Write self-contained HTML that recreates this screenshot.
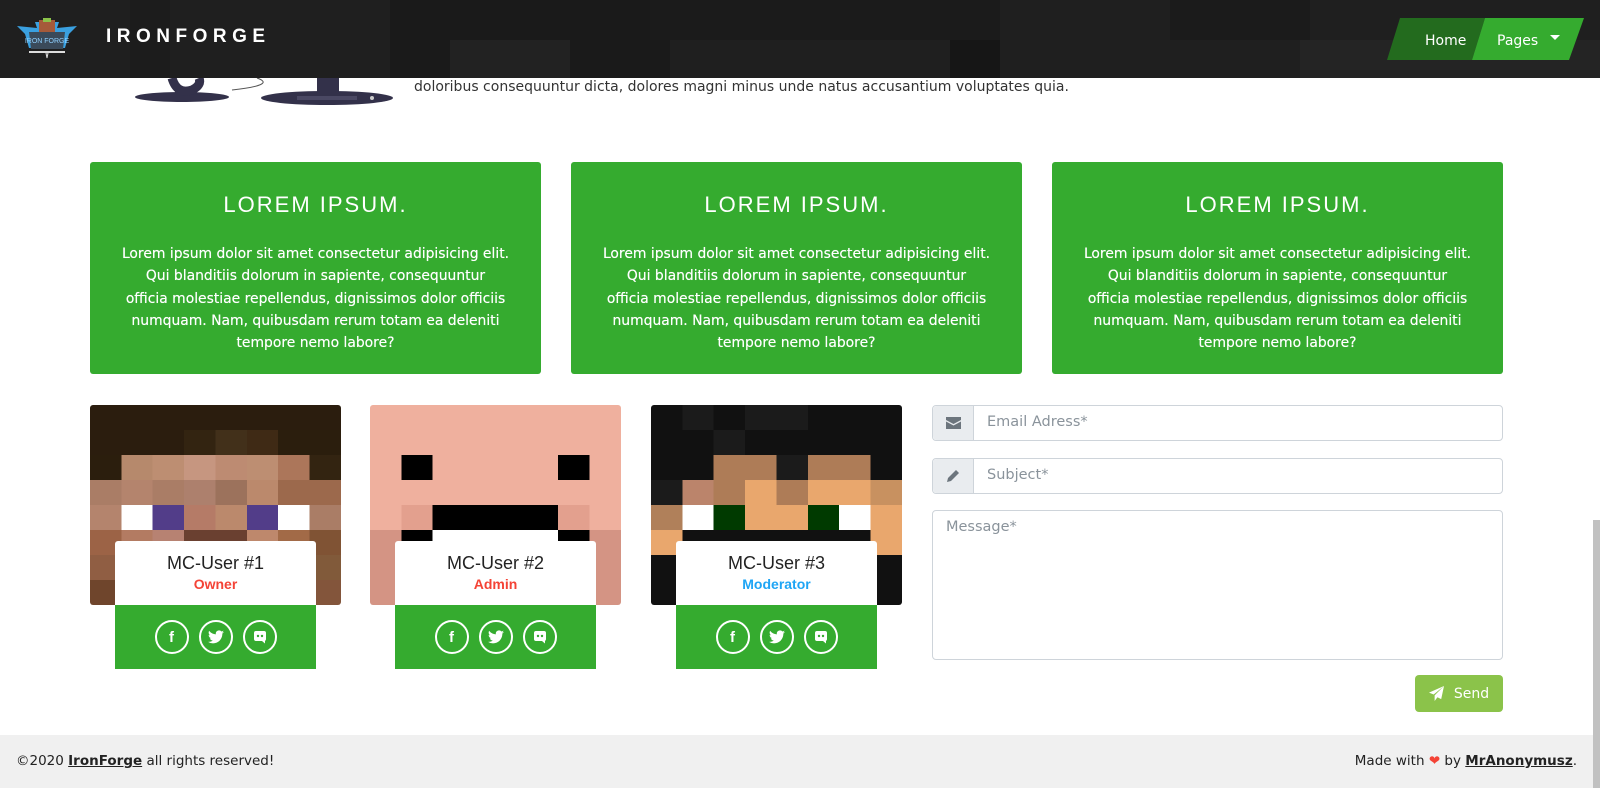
<!DOCTYPE html>
<html><head><meta charset="utf-8">
<style>
*{margin:0;padding:0;box-sizing:border-box}
body{width:1600px;height:788px;overflow:hidden;background:#fff;font-family:"Liberation Sans",sans-serif;position:relative;color:#333}
.abs{position:absolute}
.dj{font-family:"DejaVu Sans",sans-serif}
.nav{left:0;top:0;width:1600px;height:78px;background:#1f1f1f;overflow:hidden}
.nav .t{position:absolute;background:#191919}
.brand{left:106px;top:26px;color:#fff;font-weight:bold;font-size:19px;letter-spacing:5.5px}
.box{top:162px;width:451px;height:212px;background:#35ab2f;border-radius:3px;color:#fff;text-align:center}
.box h2{font-weight:normal;font-size:22px;letter-spacing:2px;margin-top:29px;line-height:28px}
.box p{font-family:"DejaVu Sans",sans-serif;font-size:13.9px;line-height:22.3px;margin:24px 0 0;white-space:nowrap;text-shadow:0 0 0.4px #fff}
.face{top:405px;width:251px;height:200px;border-radius:3px;overflow:hidden}
.face div{height:25px}
.name{top:541px;width:201px;height:64px;background:#fff;border-radius:3px 3px 0 0;text-align:center}
.name .n{font-size:18px;color:#222;margin-top:11px;line-height:22px}
.name .r{font-size:14px;font-weight:bold;margin-top:2px}
.soc{top:605px;width:201px;height:64px;background:#35ab2f;display:flex;justify-content:center;align-items:center;gap:10px}
.soc span{width:34px;height:34px;border:2px solid #fff;border-radius:50%;display:flex;align-items:center;justify-content:center;color:#fff;font-weight:bold;font-size:15px}
.inp{left:932px;width:571px;height:36px;border:1px solid #ced4da;border-radius:4px;background:#fff;font-size:14.5px;color:#8a939b;font-family:"DejaVu Sans",sans-serif}
.add{position:absolute;left:0;top:0;width:41px;height:34px;background:#e9ecef;border-right:1px solid #ced4da;display:flex;align-items:center;justify-content:center;border-radius:4px 0 0 4px}
.foot{left:0;top:735px;width:1593px;height:53px;background:#f0f0f0;font-size:13.5px;color:#222;font-family:"DejaVu Sans",sans-serif}
.foot b{text-decoration:underline}
</style></head><body>
<div class="abs" style="left:127px;top:60px;width:270px;height:45px">
<svg width="270" height="45" viewBox="0 0 270 45"><ellipse cx="55" cy="37" rx="47" ry="5" fill="#33314a"/><path d="M45 18 Q50 35 65 30 Q75 25 72 18" stroke="#33314a" stroke-width="9" fill="none"/><rect x="48" y="28" width="6" height="10" fill="#33314a"/><path d="M105 30 Q150 25 130 18" stroke="#555" fill="none"/><ellipse cx="200" cy="38" rx="66" ry="7" fill="#33314a"/><rect x="190" y="18" width="22" height="20" fill="#33314a"/><rect x="170" y="36" width="60" height="4" fill="#4a4863"/><circle cx="245" cy="38" r="2" fill="#ccc"/></svg></div>
<div class="abs dj" style="left:414px;top:79px;font-size:14px;color:#333;white-space:nowrap">doloribus consequuntur dicta, dolores magni minus unde natus accusantium voluptates quia.</div>
<div class="abs nav">
<div class="t" style="left:130px;top:0;width:40px;height:78px;background:#1c1c1c"></div>
<div class="t" style="left:390px;top:0;width:280px;height:78px;background:#1a1a1a"></div>
<div class="t" style="left:450px;top:40px;width:120px;height:38px;background:#222"></div>
<div class="t" style="left:650px;top:0;width:350px;height:40px;background:#1b1b1b"></div>
<div class="t" style="left:950px;top:40px;width:50px;height:38px;background:#161616"></div>
<div class="t" style="left:1170px;top:0;width:140px;height:40px;background:#1b1b1b"></div>
<div class="t" style="left:1300px;top:40px;width:300px;height:38px;background:#242424"></div>
<svg class="abs" style="left:15px;top:18px" width="64" height="42" viewBox="0 0 64 42"><path d="M2 8 L22 10 L20 4 L44 4 L42 10 L62 8 L54 16 L50 30 L14 30 L10 16Z" fill="#3aa0e0"/><rect x="24" y="2" width="16" height="16" fill="#a55a3a"/><rect x="28" y="0" width="8" height="4" fill="#8bc34a"/><path d="M14 14 L50 14 L48 31 L16 31Z" fill="#3a4a5a"/><text x="32" y="25" font-size="7" fill="#8fd0ff" text-anchor="middle" font-family="Liberation Sans">IRON FORGE</text><rect x="14" y="33" width="36" height="2" fill="#ddd"/><path d="M31 35 L32 40 L33 35" stroke="#ddd" fill="none"/></svg>
<div class="abs brand">IRONFORGE</div>
<svg class="abs" style="left:1387px;top:18px" width="200" height="43"><polygon points="13,0 98,0 85,42 0,42" fill="#236b1e"/><polygon points="98,0 197,0 182,42 85,42" fill="#35ab2f"/><text x="38" y="27" fill="#fff" font-size="14" font-family="DejaVu Sans">Home</text><text x="110" y="27" fill="#fff" font-size="14" font-family="DejaVu Sans">Pages</text><polygon points="163,17 173,17 168,22" fill="#fff"/></svg>
</div>

<div class="abs box" style="left:90px"><h2>LOREM IPSUM.</h2><p>Lorem ipsum dolor sit amet consectetur adipisicing elit.<br>Qui blanditiis dolorum in sapiente, consequuntur<br>officia molestiae repellendus, dignissimos dolor officiis<br>numquam. Nam, quibusdam rerum totam ea deleniti<br>tempore nemo labore?</p></div>
<div class="abs box" style="left:571px"><h2>LOREM IPSUM.</h2><p>Lorem ipsum dolor sit amet consectetur adipisicing elit.<br>Qui blanditiis dolorum in sapiente, consequuntur<br>officia molestiae repellendus, dignissimos dolor officiis<br>numquam. Nam, quibusdam rerum totam ea deleniti<br>tempore nemo labore?</p></div>
<div class="abs box" style="left:1052px"><h2>LOREM IPSUM.</h2><p>Lorem ipsum dolor sit amet consectetur adipisicing elit.<br>Qui blanditiis dolorum in sapiente, consequuntur<br>officia molestiae repellendus, dignissimos dolor officiis<br>numquam. Nam, quibusdam rerum totam ea deleniti<br>tempore nemo labore?</p></div>

<div class="abs face" style="left:90px">
<div style="background:#2b1d0e"></div>
<div style="background:linear-gradient(90deg,#2b1d0e 0 37.5%,#332411 0 50%,#42301a 0 62.5%,#3f2a15 0 75%,#2b1e0d 0)"></div>
<div style="background:linear-gradient(90deg,#2b1e0d 0 12.5%,#b6896c 0 25%,#bd8e72 0 37.5%,#c69680 0 50%,#bd8b72 0 62.5%,#bd8e72 0 75%,#ac765a 0 87.5%,#332411 0)"></div>
<div style="background:linear-gradient(90deg,#aa7d66 0 12.5%,#b4846d 0 25%,#aa7d66 0 37.5%,#ad806d 0 50%,#9c725c 0 62.5%,#bb896c 0 75%,#9c694c 0)"></div>
<div style="background:linear-gradient(90deg,#b4846d 0 12.5%,#fff 0 25%,#523d89 0 37.5%,#b57b67 0 50%,#bb896c 0 62.5%,#523d89 0 75%,#fff 0 87.5%,#aa7d66 0)"></div>
<div style="background:linear-gradient(90deg,#9c6346 0 12.5%,#b37b62 0 25%,#b78272 0 37.5%,#6a4030 0 62.5%,#be886c 0 75%,#a26a47 0 87.5%,#805334 0)"></div>
<div style="background:linear-gradient(90deg,#905e43 0 12.5%,#965f40 0 25%,#77422c 0 75%,#8f5e3e 0 87.5%,#815a3a 0)"></div>
<div style="background:linear-gradient(90deg,#6f452c 0 75%,#83553b 0)"></div>
</div>
<div class="abs face" style="left:370px">
<div style="background:#efb09e"></div><div style="background:#efb09e"></div>
<div style="background:linear-gradient(90deg,#efb09e 0 12.5%,#000 0 25%,#efb09e 0 75%,#000 0 87.5%,#efb09e 0)"></div>
<div style="background:#efb09e"></div>
<div style="background:linear-gradient(90deg,#efb09e 0 12.5%,#e3a08e 0 25%,#000 0 75%,#e3a08e 0 87.5%,#efb09e 0)"></div>
<div style="background:linear-gradient(90deg,#d49484 0 12.5%,#000 0 25%,#fff 0 75%,#000 0 87.5%,#d49484 0)"></div>
<div style="background:#d49484"></div><div style="background:#d49484"></div>
</div>
<div class="abs face" style="left:651px">
<div style="background:linear-gradient(90deg,#111 0 12.5%,#1b1b1b 0 25%,#111 0 37.5%,#1b1b1b 0 62.5%,#111 0)"></div>
<div style="background:linear-gradient(90deg,#111 0 25%,#1b1b1b 0 37.5%,#111 0)"></div>
<div style="background:linear-gradient(90deg,#111 0 25%,#ae7c57 0 50%,#1b1b1b 0 62.5%,#ae7c57 0 87.5%,#111 0)"></div>
<div style="background:linear-gradient(90deg,#1b1b1b 0 12.5%,#bb846b 0 25%,#ae7c57 0 37.5%,#e9a76d 0 50%,#ae7c57 0 62.5%,#e9a76d 0 87.5%,#c89160 0)"></div>
<div style="background:linear-gradient(90deg,#b0805a 0 12.5%,#fff 0 25%,#003a00 0 37.5%,#e9a76d 0 62.5%,#003a00 0 75%,#fff 0 87.5%,#e9a76d 0)"></div>
<div style="background:linear-gradient(90deg,#e9a76d 0 12.5%,#111 0 87.5%,#e9a76d 0)"></div>
<div style="background:#111"></div><div style="background:#111"></div>
</div>

<div class="abs name" style="left:115px"><div class="n">MC-User #1</div><div class="r" style="color:#f44336">Owner</div></div>
<div class="abs name" style="left:395px"><div class="n">MC-User #2</div><div class="r" style="color:#f44336">Admin</div></div>
<div class="abs name" style="left:676px"><div class="n">MC-User #3</div><div class="r" style="color:#1ea5f5">Moderator</div></div>

<div class="abs soc" style="left:115px"><span>f</span><span><svg width="16" height="14" viewBox="0 0 24 20"><path d="M24 2.4a10 10 0 0 1-2.8.8A5 5 0 0 0 23.3.5a10 10 0 0 1-3.1 1.2A4.9 4.9 0 0 0 11.8 6 14 14 0 0 1 1.7.9a4.9 4.9 0 0 0 1.5 6.6A5 5 0 0 1 1 6.9a4.9 4.9 0 0 0 3.9 4.8 5 5 0 0 1-2.2.1 4.9 4.9 0 0 0 4.6 3.4A9.9 9.9 0 0 1 0 17.3 14 14 0 0 0 7.5 19.5c9 0 14-7.5 14-14v-.6A10 10 0 0 0 24 2.4z" fill="#fff"/></svg></span><span><svg width="14" height="14" viewBox="0 0 14 14"><rect x="1" y="1" width="12" height="10" rx="2" fill="#fff"/><path d="M9 11 L12 13.5 L12 10Z" fill="#fff"/><circle cx="5" cy="6" r="1.2" fill="#35ab2f"/><circle cx="9" cy="6" r="1.2" fill="#35ab2f"/></svg></span></div>
<div class="abs soc" style="left:395px"><span>f</span><span><svg width="16" height="14" viewBox="0 0 24 20"><path d="M24 2.4a10 10 0 0 1-2.8.8A5 5 0 0 0 23.3.5a10 10 0 0 1-3.1 1.2A4.9 4.9 0 0 0 11.8 6 14 14 0 0 1 1.7.9a4.9 4.9 0 0 0 1.5 6.6A5 5 0 0 1 1 6.9a4.9 4.9 0 0 0 3.9 4.8 5 5 0 0 1-2.2.1 4.9 4.9 0 0 0 4.6 3.4A9.9 9.9 0 0 1 0 17.3 14 14 0 0 0 7.5 19.5c9 0 14-7.5 14-14v-.6A10 10 0 0 0 24 2.4z" fill="#fff"/></svg></span><span><svg width="14" height="14" viewBox="0 0 14 14"><rect x="1" y="1" width="12" height="10" rx="2" fill="#fff"/><path d="M9 11 L12 13.5 L12 10Z" fill="#fff"/><circle cx="5" cy="6" r="1.2" fill="#35ab2f"/><circle cx="9" cy="6" r="1.2" fill="#35ab2f"/></svg></span></div>
<div class="abs soc" style="left:676px"><span>f</span><span><svg width="16" height="14" viewBox="0 0 24 20"><path d="M24 2.4a10 10 0 0 1-2.8.8A5 5 0 0 0 23.3.5a10 10 0 0 1-3.1 1.2A4.9 4.9 0 0 0 11.8 6 14 14 0 0 1 1.7.9a4.9 4.9 0 0 0 1.5 6.6A5 5 0 0 1 1 6.9a4.9 4.9 0 0 0 3.9 4.8 5 5 0 0 1-2.2.1 4.9 4.9 0 0 0 4.6 3.4A9.9 9.9 0 0 1 0 17.3 14 14 0 0 0 7.5 19.5c9 0 14-7.5 14-14v-.6A10 10 0 0 0 24 2.4z" fill="#fff"/></svg></span><span><svg width="14" height="14" viewBox="0 0 14 14"><rect x="1" y="1" width="12" height="10" rx="2" fill="#fff"/><path d="M9 11 L12 13.5 L12 10Z" fill="#fff"/><circle cx="5" cy="6" r="1.2" fill="#35ab2f"/><circle cx="9" cy="6" r="1.2" fill="#35ab2f"/></svg></span></div>

<div class="abs inp" style="top:405px"><div class="add"><svg width="15" height="12" viewBox="0 0 15 12"><path d="M0 0H15V3L7.5 7 0 3Z M0 4.5L7.5 8.5 15 4.5V12H0Z" fill="#6c757d"/></svg></div><span style="position:absolute;left:54px;top:8px">Email Adress*</span></div>
<div class="abs inp" style="top:458px"><div class="add"><svg width="14" height="14" viewBox="0 0 14 14"><path d="M10 1 L13 4 L5 12 L1 13 L2 9Z" fill="#6c757d"/></svg></div><span style="position:absolute;left:54px;top:8px">Subject*</span></div>
<div class="abs inp" style="top:510px;height:150px"><span style="position:absolute;left:13px;top:8px">Message*</span></div>
<div class="abs dj" style="left:1415px;top:675px;width:88px;height:37px;background:#8bc34a;border-radius:4px;color:#fff;font-size:14px;display:flex;align-items:center;justify-content:center;gap:10px"><svg width="15" height="15" viewBox="0 0 16 16"><path d="M16 0 L0 7 L5 9 Z M16 0 L6 10 L6 16 L9 12 L13 14Z" fill="#fff"/></svg>Send</div>

<div class="abs foot"><span style="position:absolute;left:16px;top:18px">©2020 <b>IronForge</b> all rights reserved!</span><span style="position:absolute;right:16px;top:18px">Made with <span style="color:#f44336">❤</span> by <b>MrAnonymusz</b>.</span></div>
<div class="abs" style="left:1593px;top:520px;width:7px;height:268px;background:#c1c1c1"></div>
</body></html>
